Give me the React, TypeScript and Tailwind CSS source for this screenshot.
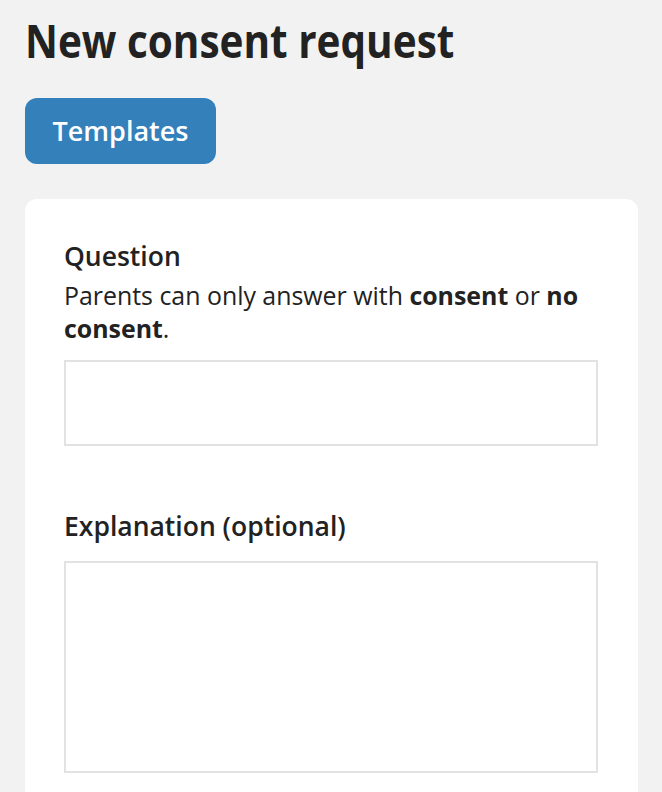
export default function App() {
  return (
    <div
      className="min-h-screen bg-[#f2f2f2] pl-[25px] pr-[24px] pt-[13px] text-[#222222]"
      style={{ fontFamily: '"Open Sans", "Noto Sans", sans-serif' }}
    >
      <h1 className="origin-left scale-x-[0.88] whitespace-nowrap text-[46px] leading-[55px] font-bold">New consent request</h1>
      <button className="mt-[30px] flex h-[66px] w-[191px] items-center justify-center rounded-[12px] bg-[#3380bb] text-[27px] font-semibold text-white">
        Templates
      </button>
      <div className="mt-[35px] rounded-[12px] bg-white pl-[39px] pr-[40px] pt-[41px] pb-[40px]">
        <div className="text-[26.5px] leading-[33px] font-semibold">Question</div>
        <p className="mt-[6px] text-[24.9px] leading-[33px]">
          Parents can only answer with <b className="font-bold">consent</b> or <b className="font-bold">no consent</b>.
        </p>
        <input className="mt-[15px] block h-[86px] w-full border-2 border-[#e2e2e2] bg-white outline-none" />
        <div className="mt-[64px] text-[26.5px] leading-[33px] font-semibold">Explanation (optional)</div>
        <textarea className="mt-[18px] block h-[212px] w-full resize-none border-2 border-[#e2e2e2] bg-white outline-none" />
      </div>
    </div>
  );
}
